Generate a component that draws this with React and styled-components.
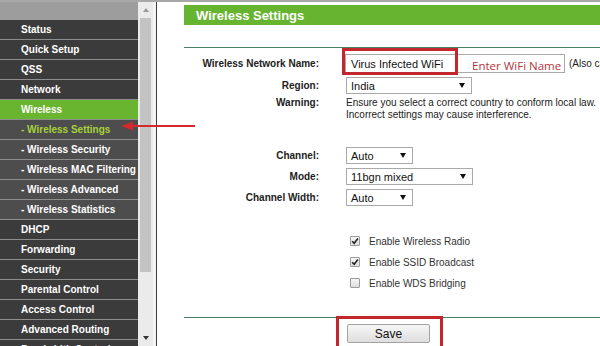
import React from "react";
import styled, { createGlobalStyle } from "styled-components";

const GlobalStyle = createGlobalStyle`
  html, body {
    margin: 0;
    padding: 0;
    background: #fff;
  }
  body {
    font-family: "Liberation Sans", Arial, sans-serif;
  }
`;

const Page = styled.div`
  position: relative;
  width: 600px;
  height: 346px;
  overflow: hidden;
  display: flex;
  box-sizing: border-box;
  border-top: 2px solid #a8a8a8;
  background: #fff;
`;

const Sidebar = styled.nav`
  width: 138px;
  flex-shrink: 0;
  display: flex;
  flex-direction: column;
  background: #3b3b3b;
`;

const MenuTop = styled.div`
  height: 18px;
  flex-shrink: 0;
  background: #9d9d9d;
`;

const MenuItem = styled.div`
  height: 19px;
  flex-shrink: 0;
  border-bottom: 1px solid #8e8e8e;
  display: flex;
  align-items: center;
  padding-left: 21px;
  font-size: 10px;
  font-weight: bold;
  white-space: nowrap;
  overflow: hidden;
  background: ${(p) => (p.$active ? "#69b52f" : p.$sub ? "#4d4d4d" : "#3b3b3b")};
  color: ${(p) => (p.$current ? "#a7d23c" : "#fff")};
`;

const Scrollbar = styled.div`
  width: 15px;
  flex-shrink: 0;
  background: #ebebeb;
  display: flex;
  flex-direction: column;
  align-items: center;
`;

const ScrollButton = styled.div`
  height: 16px;
  flex-shrink: 0;
  display: flex;
  align-items: center;
  justify-content: center;
`;

const Triangle = styled.span`
  width: 0;
  height: 0;
  border-left: 3px solid transparent;
  border-right: 3px solid transparent;
  ${(p) =>
    p.$up
      ? "border-bottom: 4px solid #9a9a9a;"
      : "border-top: 4px solid #333;"}
`;

const Thumb = styled.div`
  width: 11px;
  height: 254px;
  flex-shrink: 0;
  background: #c3c3c3;
`;

const Spacer = styled.div`
  flex: 1;
`;

const FrameEdge = styled.div`
  width: 3px;
  flex-shrink: 0;
  background: #f4f4f4;
  border-right: 1px solid #3a3a3a;
`;

const Main = styled.main`
  flex: 1;
  min-width: 0;
  padding: 3px 0 0 27px;
  display: flex;
  flex-direction: column;
`;

const TitleBar = styled.h1`
  margin: 0;
  height: 20px;
  flex-shrink: 0;
  background: #67b431;
  color: #fff;
  font-size: 13px;
  font-weight: bold;
  display: flex;
  align-items: center;
  padding-left: 12px;
`;

const Rule = styled.div`
  height: 1px;
  flex-shrink: 0;
  background: #4d8163;
  margin-top: ${(p) => p.$mt}px;
`;

const Row = styled.div`
  display: grid;
  grid-template-columns: 135px 1fr;
  column-gap: 27px;
  align-items: ${(p) => (p.$top ? "start" : "center")};
  margin-top: ${(p) => p.$mt}px;
  height: ${(p) => p.$h}px;
  flex-shrink: 0;
`;

const Label = styled.div`
  text-align: right;
  font-size: 10px;
  font-weight: bold;
  color: #222;
  white-space: nowrap;
  line-height: 12px;
`;

const Value = styled.div`
  display: flex;
  align-items: center;
  white-space: nowrap;
  font-size: 10px;
  color: #222;
  padding-left: ${(p) => p.$pl || 0}px;
  gap: ${(p) => p.$gap || 0}px;
`;

const Note = styled.div`
  font-size: 10px;
  line-height: 12px;
  color: #222;
  white-space: nowrap;
`;

const InputWrap = styled.div`
  position: relative;
  width: 220px;
  height: 19px;
  box-sizing: border-box;
  border: 1px solid #a9a9a9;
  margin-left: -1px;
  display: flex;
  align-items: center;
  padding-left: 5px;
  font-size: 11px;
  color: #111;
  flex-shrink: 0;
`;

const Callout = styled.div`
  position: absolute;
  left: ${(p) => p.$l}px;
  top: ${(p) => p.$t}px;
  width: ${(p) => p.$w}px;
  height: ${(p) => p.$h}px;
  box-sizing: border-box;
  border: 3px solid #c3262c;
  pointer-events: none;
`;

const HintText = styled.span`
  position: absolute;
  left: 126px;
  top: 4px;
  font-family: "Open Sans", "Noto Sans", sans-serif;
  font-size: 11.5px;
  line-height: 14px;
  color: #b5343a;
`;

const AlsoText = styled.span`
  margin-left: 4px;
  font-size: 10px;
  color: #222;
`;

const Select = styled.div`
  width: ${(p) => p.$w}px;
  height: 17px;
  box-sizing: border-box;
  border: 1px solid #a9a9a9;
  display: flex;
  align-items: center;
  justify-content: space-between;
  padding: 0 6px 0 4px;
  font-size: 11px;
  color: #111;
  background: #fff;
`;

const Caret = styled.span`
  width: 0;
  height: 0;
  border-left: 3px solid transparent;
  border-right: 3px solid transparent;
  border-top: 5px solid #111;
`;

const CheckBox = styled.span`
  width: 10px;
  height: 10px;
  box-sizing: border-box;
  border: 1px solid #9c9c9c;
  border-radius: 1px;
  background: linear-gradient(#f7f7f7, #dcdcdc);
  display: flex;
  align-items: center;
  justify-content: center;
  flex-shrink: 0;
`;

const CheckLabel = styled.span`
  font-size: 10px;
  color: #333;
`;

const SaveWrap = styled.div`
  position: relative;
  margin-left: 1px;
`;

const Button = styled.div`
  width: 83px;
  height: 19px;
  box-sizing: border-box;
  border: 1px solid #a3a3a3;
  border-radius: 2px;
  background: linear-gradient(#f6f6f6, #dedede);
  display: flex;
  align-items: center;
  justify-content: center;
  font-size: 12px;
  color: #111;
`;

const ArrowOverlay = styled.svg`
  position: absolute;
  left: 120px;
  top: 117px;
`;

const menu = [
  { label: "Status" },
  { label: "Quick Setup" },
  { label: "QSS" },
  { label: "Network" },
  { label: "Wireless", active: true },
  { label: "- Wireless Settings", sub: true, current: true },
  { label: "- Wireless Security", sub: true },
  { label: "- Wireless MAC Filtering", sub: true },
  { label: "- Wireless Advanced", sub: true },
  { label: "- Wireless Statistics", sub: true },
  { label: "DHCP" },
  { label: "Forwarding" },
  { label: "Security" },
  { label: "Parental Control" },
  { label: "Access Control" },
  { label: "Advanced Routing" },
  { label: "Bandwidth Control" },
];

function Tick() {
  return (
    <svg width="8" height="8" viewBox="0 0 8 8">
      <path d="M1.2 4.2 L3.2 6.3 L6.9 1.4" fill="none" stroke="#222" strokeWidth="1.6" />
    </svg>
  );
}

function Dropdown(props) {
  return (
    <Select $w={props.width}>
      <span>{props.value}</span>
      <Caret />
    </Select>
  );
}

function CheckRow(props) {
  return (
    <Row $mt={props.mt} $h={14}>
      <span />
      <Value $pl={4} $gap={9}>
        <CheckBox>{props.checked && <Tick />}</CheckBox>
        <CheckLabel>{props.label}</CheckLabel>
      </Value>
    </Row>
  );
}

export default function App() {
  return (
    <>
      <GlobalStyle />
      <Page>
        <Sidebar>
          <MenuTop />
          {menu.map((item) => (
            <MenuItem
              key={item.label}
              $active={item.active}
              $sub={item.sub}
              $current={item.current}
            >
              {item.label}
            </MenuItem>
          ))}
        </Sidebar>
        <Scrollbar>
          <ScrollButton>
            <Triangle $up />
          </ScrollButton>
          <Thumb />
          <Spacer />
          <ScrollButton>
            <Triangle />
          </ScrollButton>
        </Scrollbar>
        <FrameEdge />
        <Main>
          <TitleBar>Wireless Settings</TitleBar>
          <Rule $mt={22} />

          <Row $mt={6} $h={19}>
            <Label>Wireless Network Name:</Label>
            <Value>
              <InputWrap>
                Virus Infected WiFi
                <HintText>Enter WiFi Name</HintText>
                <Callout $l={-4} $t={-7} $w={116} $h={27} />
              </InputWrap>
              <AlsoText>(Also called the SSID)</AlsoText>
            </Value>
          </Row>

          <Row $mt={4} $h={17}>
            <Label>Region:</Label>
            <Value>
              <Dropdown width={126} value="India" />
            </Value>
          </Row>

          <Row $mt={3} $h={24} $top>
            <Label>Warning:</Label>
            <div>
              <Note>Ensure you select a correct country to conform local law.</Note>
              <Note>Incorrect settings may cause interference.</Note>
            </div>
          </Row>

          <Row $mt={26} $h={17}>
            <Label>Channel:</Label>
            <Value>
              <Dropdown width={67} value="Auto" />
            </Value>
          </Row>
          <Row $mt={4} $h={17}>
            <Label>Mode:</Label>
            <Value>
              <Dropdown width={127} value="11bgn mixed" />
            </Value>
          </Row>
          <Row $mt={4} $h={17}>
            <Label>Channel Width:</Label>
            <Value>
              <Dropdown width={67} value="Auto" />
            </Value>
          </Row>

          <CheckRow mt={28} checked label="Enable Wireless Radio" />
          <CheckRow mt={7} checked label="Enable SSID Broadcast" />
          <CheckRow mt={7} label="Enable WDS Bridging" />

          <Rule $mt={27} />

          <Row $mt={6} $h={19}>
            <span />
            <Value>
              <SaveWrap>
                <Button>Save</Button>
                <Callout $l={-11} $t={-8} $w={107} $h={40} />
              </SaveWrap>
            </Value>
          </Row>
        </Main>

        <ArrowOverlay width="78" height="14" viewBox="0 0 78 14">
          <line x1="10" y1="7" x2="75" y2="7" stroke="#d3282c" strokeWidth="2" />
          <polygon points="1,7 13,2.5 13,11.5" fill="#d3282c" />
        </ArrowOverlay>
      </Page>
    </>
  );
}
